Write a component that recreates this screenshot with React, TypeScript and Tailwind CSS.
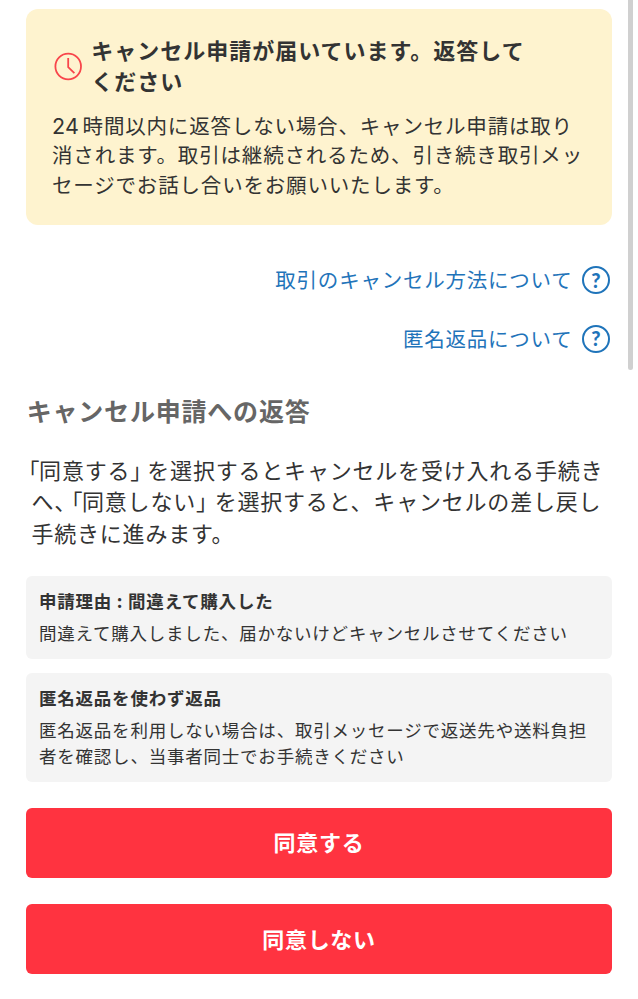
import type { ReactNode } from "react";

function Line({ children }: { children: ReactNode }) {
  return <span className="block whitespace-nowrap">{children}</span>;
}

function ClockIcon() {
  return (
    <svg className="mt-[43px] ml-[27.7px] h-[29px] w-[29px] shrink-0" viewBox="0 0 29 29" fill="none" stroke="#f8454b" strokeWidth="1.8">
      <circle cx="14.2" cy="14.5" r="12.8" />
      <path d="M14.2 6v9.1l6.2 6" />
    </svg>
  );
}

function HelpLink({ label }: { label: string }) {
  return (
    <a className="flex h-[28px] items-center justify-end gap-[9.5px] text-[20.5px] tracking-[0.77px] text-[#1f74ba]">
      <span className="-mt-[2px] leading-[28px]">{label}</span>
      <span className="flex h-7 w-7 items-center justify-center rounded-full border-2 border-[#1f74ba] pb-px font-['Lato',sans-serif] text-[20px] leading-none font-black tracking-normal">
        ?
      </span>
    </a>
  );
}

function InfoCard({ title, children }: { title: string; children: ReactNode }) {
  return (
    <section className="rounded-[6px] bg-[#f4f4f4] pt-[11px] pb-[13px] pl-[13px] text-[17.5px] tracking-[0.78px]">
      <h3 className="leading-[28px] font-bold">{title}</h3>
      <p className="mt-[5px] leading-[26px]">{children}</p>
    </section>
  );
}

function ActionButton({ label }: { label: string }) {
  return (
    <button className="h-[70px] w-full rounded-[6px] bg-[#ff3340] pb-[3px] text-[22px] leading-[66px] font-bold tracking-[0.7px] text-white">
      {label}
    </button>
  );
}

export default function App() {
  return (
    <main className="relative h-[999px] w-[638px] overflow-hidden bg-white pt-[9px] pr-[26px] pl-[26px] font-['Noto_Sans_CJK_JP',sans-serif] text-[#333]">
      <section className="h-[216px] rounded-[12px] bg-[#fef3cf]">
        <div className="flex">
          <ClockIcon />
          <h1 className="mt-[25px] ml-[8.5px] text-[22px] leading-[31px] font-bold tracking-[1px]">
            <Line>キャンセル申請が届いています。返答して</Line>
            <Line>ください</Line>
          </h1>
        </div>
        <p className="mt-[15px] ml-[26px] text-[20.5px] leading-[29.3px] tracking-[0.82px]">
          <Line>
            <span className="mr-[3.5px] font-['Inter',sans-serif] text-[21.5px] leading-none tracking-[0.2px]">24</span>
            時間以内に返答しない場合、キャンセル申請は取り
          </Line>
          <Line>消されます。取引は継続されるため、引き続き取引メッ</Line>
          <Line>セージでお話し合いをお願いいたします。</Line>
        </p>
      </section>

      <nav className="mt-[41px] flex flex-col gap-[30.5px] pr-[2px]">
        <HelpLink label="取引のキャンセル方法について" />
        <HelpLink label="匿名返品について" />
      </nav>

      <h2 className="mt-[39.5px] ml-[0.7px] text-[25px] leading-[36px] font-bold tracking-[0.8px] text-[#666]">
        キャンセル申請への返答
      </h2>

      <p className="mt-[26px] ml-[5.4px] text-[22px] leading-[31.4px] tracking-[0.8px]">
        <Line>
          <span className="-ml-[2.9px] tracking-[-0.4px] [font-feature-settings:'halt']">「</span>
          同意する
          <span className="mr-[5.2px] [font-feature-settings:'halt']">」</span>
          を選択するとキャンセルを受け入れる手続き
        </Line>
        <Line>
          へ<span className="mr-[5.6px] [font-feature-settings:'halt']">、</span>
          <span className="tracking-[-0.6px] [font-feature-settings:'halt']">「</span>
          同意しない
          <span className="mr-[6.8px] [font-feature-settings:'halt']">」</span>
          を選択すると、キャンセルの差し戻し
        </Line>
        <Line>手続きに進みます。</Line>
      </p>

      <div className="mt-[27.3px] flex flex-col gap-[14px]">
        <InfoCard title="申請理由 : 間違えて購入した">
          <Line>間違えて購入しました、届かないけどキャンセルさせてください</Line>
        </InfoCard>
        <InfoCard title="匿名返品を使わず返品">
          <Line>匿名返品を利用しない場合は、取引メッセージで返送先や送料負担</Line>
          <Line>者を確認し、当事者同士でお手続きください</Line>
        </InfoCard>
      </div>

      <div className="mt-[26.2px] flex flex-col gap-[26.5px]">
        <ActionButton label="同意する" />
        <ActionButton label="同意しない" />
      </div>

      <div className="absolute top-0 right-[5px] h-[370px] w-[5px] rounded-b-full bg-[#d0d0d0]" />
    </main>
  );
}
